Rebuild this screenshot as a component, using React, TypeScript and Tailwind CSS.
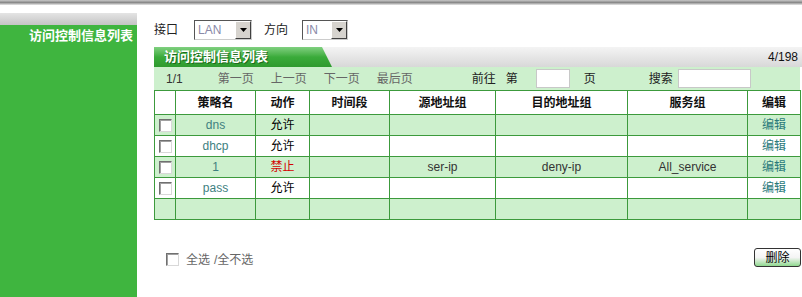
import React from "react";

const font = { fontFamily: '"Liberation Sans", Arial, "Noto Sans CJK SC", sans-serif' };

const Check = () => (
  <span className="inline-block w-[13px] h-[13px] bg-white border border-t-[#707070] border-l-[#707070] border-r-[#d8d8d8] border-b-[#d8d8d8] shadow-[inset_1px_1px_0_#a0a0a0] align-middle" />
);

const Select = ({ value, width }: { value: string; width: string }) => (
  <div className={`flex h-[20px] ${width} border border-t-[#555] border-l-[#555] border-r-[#ccc] border-b-[#ccc] bg-white`}>
    <span className="flex-1 pl-[3px] text-[12px] leading-[18px] text-[#8a8aa8]">{value}</span>
    <span className="w-[16px] h-[18px] bg-[#d6d3ce] border border-t-white border-l-white border-r-[#404040] border-b-[#404040] flex items-center justify-center">
      <svg width="7" height="4" viewBox="0 0 7 4"><path d="M0 0h7L3.5 4z" fill="#000" /></svg>
    </span>
  </div>
);

const rows = [
  { name: "dns", act: "允许", deny: false, src: "", dst: "", svc: "" },
  { name: "dhcp", act: "允许", deny: false, src: "", dst: "", svc: "" },
  { name: "1", act: "禁止", deny: true, src: "ser-ip", dst: "deny-ip", svc: "All_service" },
  { name: "pass", act: "允许", deny: false, src: "", dst: "", svc: "" },
];

const cols = ["w-[21px]", "w-[80px]", "w-[54px]", "w-[80px]", "w-[106px]", "w-[132px]", "w-[120px]", "w-[53px]"];
const heads = ["", "策略名", "动作", "时间段", "源地址组", "目的地址组", "服务组", "编辑"];

export default function App() {
  return (
    <div className="w-[802px] h-[297px] bg-white overflow-hidden flex flex-col text-[12px]" style={font}>
      {/* top band */}
      <div className="h-[5px] bg-gradient-to-b from-[#c8c8c8] via-[#8a8a8a] to-[#e8e8e8]" />
      <div className="flex flex-1">
        {/* sidebar */}
        <div className="w-[137px] flex flex-col pt-[8px]">
          <div className="h-[12px] bg-gradient-to-b from-[#e4e4e4] to-[#c4c4c4]" />
          <div className="flex-1 bg-[#3fb53f] pt-[2px] pr-[4px] text-right text-white font-bold text-[13px] leading-[18px]">
            访问控制信息列表
          </div>
        </div>
        {/* main */}
        <div className="flex-1 ml-[17px] flex flex-col">
          <div className="mt-[15px] h-[20px] flex items-center text-[#222]">
            <span className="mr-[16px]">接口</span>
            <Select value="LAN" width="w-[58px]" />
            <span className="ml-[12px] mr-[14px]">方向</span>
            <Select value="IN" width="w-[46px]" />
          </div>
          {/* title bar */}
          <div className="mt-[7px] h-[20px] flex bg-gradient-to-b from-[#f4f4f4] to-[#d8d8d8]">
            <div className="w-[178px] bg-gradient-to-b from-[#7fd07f] via-[#3aab3a] to-[#2f9a2f] [clip-path:polygon(0_0,168px_0,178px_100%,0_100%)] pl-[10px] text-white font-bold text-[13px] leading-[20px] [text-shadow:1px_1px_0_#1d6b1d]">
              访问控制信息列表
            </div>
            <div className="flex-1" />
            <span className="pr-[4px] leading-[20px] text-[#111]">4/198</span>
          </div>
          {/* pager */}
          <div className="h-[23px] flex items-center bg-[#cdf0cd] text-[#666] mr-[2px]">
            <span className="ml-[12px] text-[#333]">1/1</span>
            <span className="ml-[35px]">第一页</span>
            <span className="ml-[17px]">上一页</span>
            <span className="ml-[17px]">下一页</span>
            <span className="ml-[17px]">最后页</span>
            <span className="ml-[59px] text-[#222]">前往</span>
            <span className="ml-[10px] text-[#222]">第</span>
            <span className="ml-[18px] w-[34px] h-[19px] bg-white border border-[#c8c8c8]" />
            <span className="ml-[14px] text-[#222]">页</span>
            <span className="ml-[53px] text-[#222]">搜索</span>
            <span className="ml-[5px] w-[73px] h-[19px] bg-white border border-[#c8c8c8]" />
          </div>
          <table className="w-[646px] border-collapse table-fixed text-center">
            <thead>
              <tr className="h-[24px] bg-white">
                {heads.map((h, i) => (
                  <th key={i} className={`${cols[i]} border border-[#3c9a3c] font-bold text-[#111] p-0`}>{h}</th>
                ))}
              </tr>
            </thead>
            <tbody>
              {rows.map((r, i) => (
                <tr key={i} className={`h-[21px] ${i % 2 === 0 ? "bg-[#cdf0cd]" : "bg-white"}`}>
                  <td className="border border-[#3c9a3c] p-0 text-left pl-[4px]"><Check /></td>
                  <td className="border border-[#3c9a3c] p-0 text-[#3e7f7f]">{r.name}</td>
                  <td className={`border border-[#3c9a3c] p-0 ${r.deny ? "text-[#d40000]" : "text-black"}`}>{r.act}</td>
                  <td className="border border-[#3c9a3c] p-0" />
                  <td className="border border-[#3c9a3c] p-0 text-[#333]">{r.src}</td>
                  <td className="border border-[#3c9a3c] p-0 text-[#333]">{r.dst}</td>
                  <td className="border border-[#3c9a3c] p-0 text-[#333]">{r.svc}</td>
                  <td className="border border-[#3c9a3c] p-0 text-[#2a7a7a]">编辑</td>
                </tr>
              ))}
              <tr className="h-[21px] bg-[#cdf0cd]">
                {heads.map((_, i) => (
                  <td key={i} className="border border-[#3c9a3c] p-0" />
                ))}
              </tr>
            </tbody>
          </table>
          {/* bottom */}
          <div className="mt-[28px] flex items-start">
            <span className="ml-[12px] mt-[3px] h-[17px] flex items-center text-[#666]">
              <Check />
              <span className="ml-[7px]">全选</span>
              <span className="ml-[4px]">/全不选</span>
            </span>
            <div className="flex-1" />
            <button className="mr-[1px] w-[47px] h-[19px] rounded-[3px] border border-[#333] bg-gradient-to-b from-white via-[#f4f4f4] to-[#8fd88f] text-[12px] leading-[16px] text-black">
              删除
            </button>
          </div>
        </div>
      </div>
    </div>
  );
}
